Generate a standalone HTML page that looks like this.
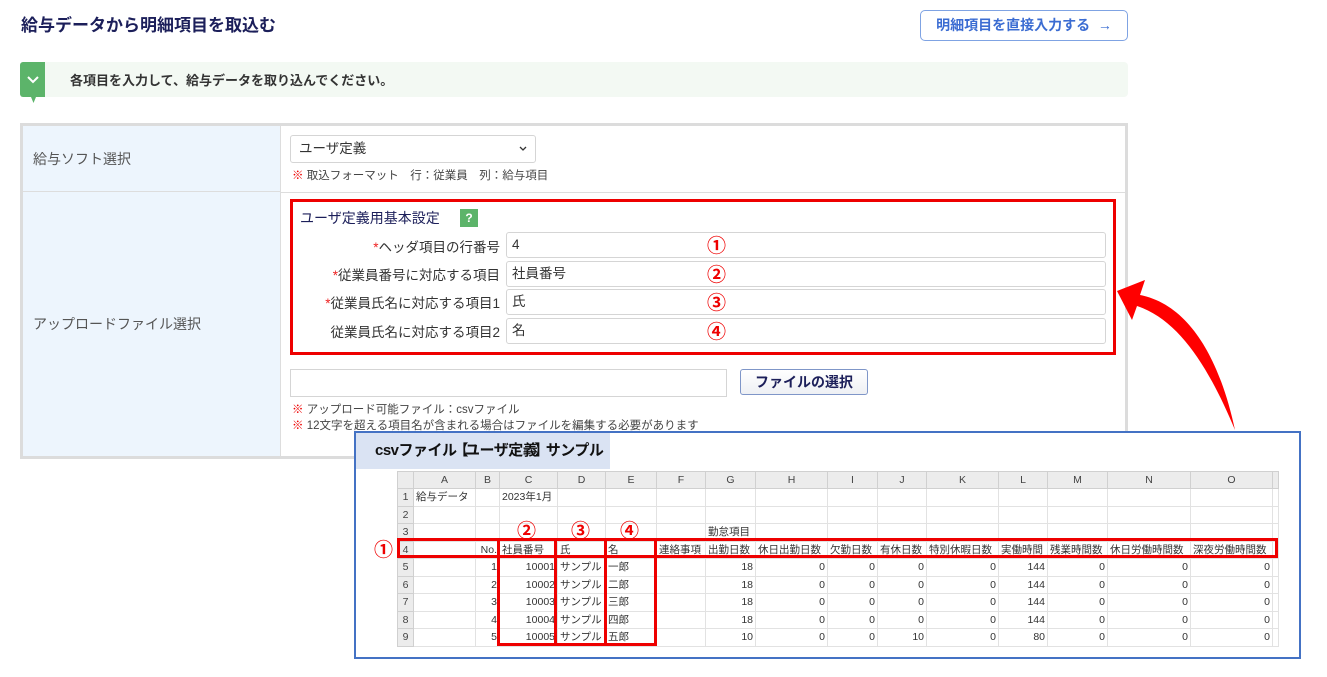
<!DOCTYPE html>
<html><head><meta charset="utf-8"><style>
*{margin:0;padding:0;box-sizing:border-box}
body{width:1327px;height:677px;background:#fff;position:relative;overflow:hidden;font-family:"Liberation Sans","Noto Sans CJK JP",sans-serif;color:#333}
.a{position:absolute}
.title{left:21px;top:11px;font-size:17px;font-weight:bold;color:#1c1f5a}
.btn{left:920px;top:10px;width:208px;height:31px;border:1px solid #7fa3e3;border-radius:5px;color:#3b6cd2;font-size:14px;font-weight:bold;text-align:center;line-height:29px}
.info{left:20px;top:62px;width:1108px;height:35px;background:#f3f9f3;border-radius:4px}
.chk{left:20px;top:62px;width:25px;height:35px;background:#5cb46a;border-radius:3px 0 0 3px}
.tbl{left:20px;top:123px;width:1108px;height:336px;border:3px solid #dcdcdc;background:#fff}
.lc{background:#edf5fd;border-right:1px solid #ddd;position:absolute;left:0;width:258px;font-size:14px;color:#555;padding-left:10px}
.inp{border:1px solid #d5d5d5;border-radius:3px;background:#fff;position:absolute}
.note{font-size:11.5px;color:#444}
.note b{color:#e00;font-weight:bold}
.lbl{position:absolute;right:827px;font-size:13.5px;color:#333;white-space:nowrap}
.lbl i{color:#e22;font-style:normal}
.cn{position:absolute;color:#e00;font-weight:bold;font-size:19px;line-height:20px;font-family:"Noto Sans CJK JP",sans-serif}
.ov{left:354px;top:431px;width:947px;height:228px;border:2px solid #4472c4;background:#fff}
table.s{border-collapse:collapse;position:absolute;left:397px;top:471px;table-layout:fixed;font-size:10.5px;color:#333}
table.s td{border:1px solid #e2e2e2;padding:0 2px;white-space:nowrap;overflow:hidden;height:17.5px;line-height:16px}
table.s tr.h td{background:#ececec;text-align:center;height:16px;color:#444;border-color:#d0d0d0}
table.s td.r{background:#ececec;text-align:center;color:#444;border-color:#d0d0d0}
.n{text-align:right}
.rb{position:absolute;border:3px solid #e00}
.v{font-size:13.5px;padding:0 5px;line-height:24px}
</style></head><body>
<div class="a title">給与データから明細項目を取込む</div>
<div class="a btn">明細項目を直接入力する &nbsp;→</div>
<div class="a info"></div>
<div class="a chk"></div>
<svg class="a" style="left:20px;top:62px" width="26" height="44"><path d="M8 15l5 5 5-5" stroke="#fff" stroke-width="2" fill="none"/><path d="M11 35l5 0-2.5 6z" fill="#5cb46a"/></svg>
<div class="a" style="left:70px;top:70px;font-size:13px;font-weight:bold;color:#333">各項目を入力して、給与データを取り込んでください。</div>

<div class="a tbl">
 <div class="lc" style="top:0;height:66px;line-height:66px;border-bottom:1px solid #ddd">給与ソフト選択</div>
 <div class="lc" style="top:66px;height:264px;line-height:264px">アップロードファイル選択</div>
 <div style="position:absolute;left:258px;right:0;top:66px;border-top:1px solid #ddd"></div>
</div>
<div class="a inp" style="left:290px;top:135px;width:246px;height:28px;font-size:13.5px;padding:0 8px;line-height:26px;color:#333">ユーザ定義</div>
<svg class="a" style="left:519px;top:146px" width="8" height="6"><path d="M1 1l3 3 3-3" stroke="#333" stroke-width="1.3" fill="none"/></svg>
<div class="a note" style="left:292px;top:167px"><b>※</b> 取込フォーマット　行：従業員　列：給与項目</div>

<div class="rb" style="left:290px;top:199px;width:826px;height:156px"></div>
<div class="a" style="left:300px;top:208px;font-size:14px;color:#1c1f5a">ユーザ定義用基本設定</div>
<div class="a" style="left:460px;top:209px;width:18px;height:18px;background:#5cb46a;color:#fff;font-weight:bold;font-size:12px;text-align:center;line-height:18px">?</div>
<div class="lbl" style="top:236px"><i>*</i>ヘッダ項目の行番号</div>
<div class="lbl" style="top:264px"><i>*</i>従業員番号に対応する項目</div>
<div class="lbl" style="top:292px"><i>*</i>従業員氏名に対応する項目1</div>
<div class="lbl" style="top:321px">従業員氏名に対応する項目2</div>
<div class="a inp v" style="left:506px;top:232px;width:600px;height:26px">4</div>
<div class="a inp v" style="left:506px;top:261px;width:600px;height:26px">社員番号</div>
<div class="a inp v" style="left:506px;top:289px;width:600px;height:26px">氏</div>
<div class="a inp v" style="left:506px;top:318px;width:600px;height:26px">名</div>
<div class="cn" style="left:707px;top:235px">①</div>
<div class="cn" style="left:707px;top:264px">②</div>
<div class="cn" style="left:707px;top:292px">③</div>
<div class="cn" style="left:707px;top:321px">④</div>

<div class="a inp" style="left:290px;top:369px;width:437px;height:28px;border-radius:0"></div>
<div class="a" style="left:740px;top:369px;width:128px;height:26px;border:1px solid #7f96c8;border-radius:3px;background:linear-gradient(#fff,#eef0f4);font-size:14px;font-weight:bold;color:#1c1f5a;text-align:center;line-height:24px">ファイルの選択</div>
<div class="a note" style="left:292px;top:401px"><b>※</b> アップロード可能ファイル：csvファイル</div>
<div class="a note" style="left:292px;top:417px"><b>※</b> 12文字を超える項目名が含まれる場合はファイルを編集する必要があります</div>

<svg class="a" style="left:1100px;top:270px" width="150" height="170"><path d="M135 160 C120 90 90 35 40 25 L45 10 L17 21 L32 50 L37 36 C80 50 110 100 135 160Z" fill="#f00"/></svg>

<div class="a ov">
 <div style="position:absolute;left:0;top:0;width:254px;height:36px;background:#dae3f3;font-size:15px;font-weight:bold;color:#111;line-height:36px;padding-left:19px;white-space:nowrap;letter-spacing:-0.5px">csvファイル<span style="margin:0 -3px">【</span>ユーザ定義<span style="margin:0 -3px">】</span>サンプル</div>
</div>
<table class="s">
<colgroup><col style="width:16px"><col style="width:62px"><col style="width:24px"><col style="width:58px"><col style="width:48px"><col style="width:51px"><col style="width:49px"><col style="width:50px"><col style="width:72px"><col style="width:50px"><col style="width:49px"><col style="width:72px"><col style="width:49px"><col style="width:60px"><col style="width:83px"><col style="width:82px"><col style="width:6px"></colgroup>
<tr class="h"><td></td><td>A</td><td>B</td><td>C</td><td>D</td><td>E</td><td>F</td><td>G</td><td>H</td><td>I</td><td>J</td><td>K</td><td>L</td><td>M</td><td>N</td><td>O</td><td></td></tr>
<tr><td class="r">1</td><td>給与データ</td><td></td><td>2023年1月</td><td></td><td></td><td></td><td></td><td></td><td></td><td></td><td></td><td></td><td></td><td></td><td></td><td></td></tr>
<tr><td class="r">2</td><td></td><td></td><td></td><td></td><td></td><td></td><td></td><td></td><td></td><td></td><td></td><td></td><td></td><td></td><td></td><td></td></tr>
<tr><td class="r">3</td><td></td><td></td><td></td><td></td><td></td><td></td><td>勤怠項目</td><td></td><td></td><td></td><td></td><td></td><td></td><td></td><td></td><td></td></tr>
<tr><td class="r">4</td><td></td><td class="n">No.</td><td>社員番号</td><td>氏</td><td>名</td><td>連絡事項</td><td>出勤日数</td><td>休日出勤日数</td><td>欠勤日数</td><td>有休日数</td><td>特別休暇日数</td><td>実働時間</td><td>残業時間数</td><td>休日労働時間数</td><td>深夜労働時間数</td><td></td></tr>
<tr><td class="r">5</td><td></td><td class="n">1</td><td class="n">10001</td><td>サンプル</td><td>一郎</td><td></td><td class="n">18</td><td class="n">0</td><td class="n">0</td><td class="n">0</td><td class="n">0</td><td class="n">144</td><td class="n">0</td><td class="n">0</td><td class="n">0</td><td></td></tr>
<tr><td class="r">6</td><td></td><td class="n">2</td><td class="n">10002</td><td>サンプル</td><td>二郎</td><td></td><td class="n">18</td><td class="n">0</td><td class="n">0</td><td class="n">0</td><td class="n">0</td><td class="n">144</td><td class="n">0</td><td class="n">0</td><td class="n">0</td><td></td></tr>
<tr><td class="r">7</td><td></td><td class="n">3</td><td class="n">10003</td><td>サンプル</td><td>三郎</td><td></td><td class="n">18</td><td class="n">0</td><td class="n">0</td><td class="n">0</td><td class="n">0</td><td class="n">144</td><td class="n">0</td><td class="n">0</td><td class="n">0</td><td></td></tr>
<tr><td class="r">8</td><td></td><td class="n">4</td><td class="n">10004</td><td>サンプル</td><td>四郎</td><td></td><td class="n">18</td><td class="n">0</td><td class="n">0</td><td class="n">0</td><td class="n">0</td><td class="n">144</td><td class="n">0</td><td class="n">0</td><td class="n">0</td><td></td></tr>
<tr><td class="r">9</td><td></td><td class="n">5</td><td class="n">10005</td><td>サンプル</td><td>五郎</td><td></td><td class="n">10</td><td class="n">0</td><td class="n">0</td><td class="n">10</td><td class="n">0</td><td class="n">80</td><td class="n">0</td><td class="n">0</td><td class="n">0</td><td></td></tr>
</table>
<div class="rb" style="left:397px;top:538px;width:881px;height:20px"></div>
<div class="rb" style="left:497px;top:538px;width:60px;height:108px"></div>
<div class="rb" style="left:554px;top:538px;width:53px;height:108px"></div>
<div class="rb" style="left:604px;top:538px;width:53px;height:108px"></div>
<div class="cn" style="left:374px;top:539px">①</div>
<div class="cn" style="left:517px;top:520px">②</div>
<div class="cn" style="left:571px;top:520px">③</div>
<div class="cn" style="left:620px;top:520px">④</div>
</body></html>
